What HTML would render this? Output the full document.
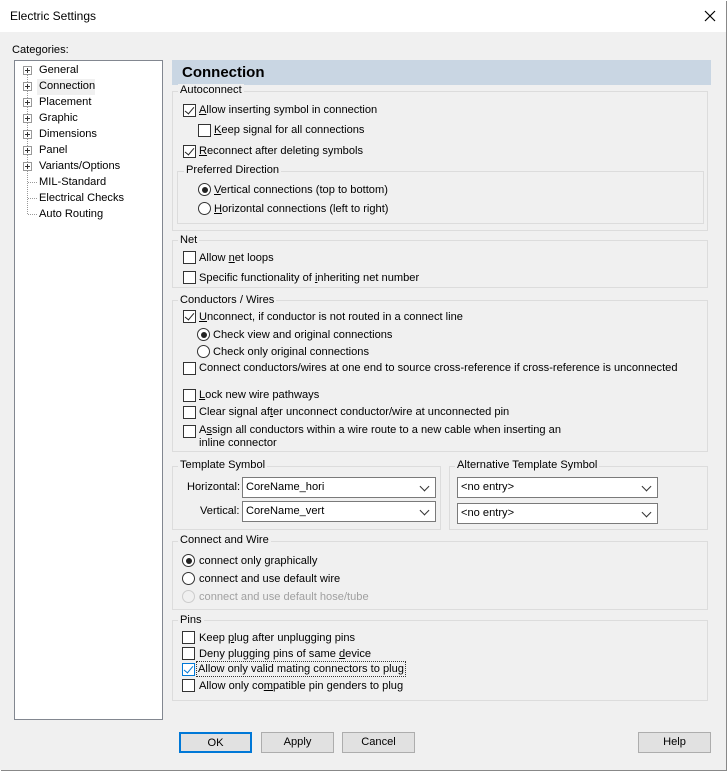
<!DOCTYPE html>
<html><head><meta charset="utf-8"><style>
*{box-sizing:border-box;margin:0;padding:0}
body{width:727px;height:771px;background:#fff;font-family:"Liberation Sans",sans-serif;font-size:11.1px;color:#000;position:relative;overflow:hidden}
.dlg{position:absolute;left:0;top:0;width:726px;height:770px;box-shadow:1px 1px 0 #888;background:#f0f0f0}
.tb{position:absolute;left:0;top:0;width:726px;height:32px;background:#fff}
.a{position:absolute;white-space:nowrap;line-height:14px}
.g{position:absolute;border:1px solid #dcdcdc}
.gl{position:absolute;background:#f0f0f0;padding:0 2px;line-height:13px;white-space:nowrap}
.cb{position:absolute;width:13px;height:13px;border:1px solid #333;background:#fff}
.cb.c::after{content:"";position:absolute;left:3px;top:0px;width:4px;height:8px;border:solid #222;border-width:0 1.3px 1.3px 0;transform:rotate(40deg)}
.cb.blue{border-color:#0078d7}
.cb.blue::after{border-color:#0078d7}
.rb{position:absolute;width:13px;height:13px;border:1px solid #333;border-radius:50%;background:#fff}
.rb.s::after{content:"";position:absolute;left:2.5px;top:2.5px;width:6px;height:6px;border-radius:50%;background:#222}
.rb.d{border-color:#ccc;background:#f0f0f0}
.cmb{position:absolute;height:21px;border:1px solid #7a7a7a;background:#fff;padding-left:3px;line-height:19px}
.cmb::after{content:"";position:absolute;right:7px;top:5px;width:6px;height:6px;border:solid #333;border-width:0 1px 1px 0;transform:rotate(45deg)}
.btn{position:absolute;height:21px;width:73px;border:1px solid #adadad;background:#e1e1e1;text-align:center;line-height:19px}
.tr{position:absolute;left:23px;width:9px;height:9px;border:1px solid #999;background:#fff}
.tr::before{content:"";position:absolute;left:1px;top:3px;width:5px;height:1px;background:#333}
.tr::after{content:"";position:absolute;left:3px;top:1px;width:1px;height:5px;background:#333}
u{text-decoration:underline}
</style></head><body>
<div class="dlg">
<div class="tb"></div>
<div class="a" style="left:10px;top:9px;font-size:12px">Electric Settings</div>
<svg style="position:absolute;left:704px;top:10px" width="12" height="12"><path d="M1 1L11 11M11 1L1 11" stroke="#000" stroke-width="1.2"/></svg>
<div class="a" style="left:12px;top:43px">Categories:</div>
<div style="position:absolute;left:14px;top:60px;width:149px;height:660px;border:1px solid #828790;background:#fff"></div>
<div style="position:absolute;left:27px;top:70px;height:144px;border-left:1px dotted #999"></div>
<div class="tr" style="top:66px"></div><div class="a" style="left:39px;top:63px">General</div>
<div style="position:absolute;left:37px;top:79px;width:58px;height:16px;background:#f0f0f0"></div>
<div class="tr" style="top:82px"></div><div class="a" style="left:39px;top:79px">Connection</div>
<div class="tr" style="top:98px"></div><div class="a" style="left:39px;top:95px">Placement</div>
<div class="tr" style="top:114px"></div><div class="a" style="left:39px;top:111px">Graphic</div>
<div class="tr" style="top:130px"></div><div class="a" style="left:39px;top:127px">Dimensions</div>
<div class="tr" style="top:146px"></div><div class="a" style="left:39px;top:143px">Panel</div>
<div class="tr" style="top:162px"></div><div class="a" style="left:39px;top:159px">Variants/Options</div>
<div style="position:absolute;left:28px;top:182px;width:9px;border-top:1px dotted #999"></div><div class="a" style="left:39px;top:175px">MIL-Standard</div>
<div style="position:absolute;left:28px;top:198px;width:9px;border-top:1px dotted #999"></div><div class="a" style="left:39px;top:191px">Electrical Checks</div>
<div style="position:absolute;left:28px;top:214px;width:9px;border-top:1px dotted #999"></div><div class="a" style="left:39px;top:207px">Auto Routing</div>

<div style="position:absolute;left:172px;top:60px;width:539px;height:25px;background:#c9d6e3"></div>
<div class="a" style="left:182px;top:65px;font-size:15px;font-weight:bold;line-height:16px">Connection</div>

<div class="g" style="left:172px;top:91px;width:536px;height:140px"></div>
<div class="gl" style="left:178px;top:84px">Autoconnect</div>
<div class="cb c" style="left:183px;top:104px"></div><div class="a" style="left:199px;top:103px"><u>A</u>llow inserting symbol in connection</div>
<div class="cb" style="left:198px;top:124px"></div><div class="a" style="left:214px;top:123px"><u>K</u>eep signal for all connections</div>
<div class="cb c" style="left:183px;top:145px"></div><div class="a" style="left:199px;top:144px"><u>R</u>econnect after deleting symbols</div>
<div class="g" style="left:177px;top:171px;width:527px;height:53px"></div>
<div class="gl" style="left:184px;top:164px">Preferred Direction</div>
<div class="rb s" style="left:198px;top:183px"></div><div class="a" style="left:214px;top:183px"><u>V</u>ertical connections (top to bottom)</div>
<div class="rb" style="left:198px;top:202px"></div><div class="a" style="left:214px;top:202px"><u>H</u>orizontal connections (left to right)</div>

<div class="g" style="left:172px;top:240px;width:536px;height:48px"></div>
<div class="gl" style="left:178px;top:234px">Net</div>
<div class="cb" style="left:183px;top:251px"></div><div class="a" style="left:199px;top:251px">Allow <u>n</u>et loops</div>
<div class="cb" style="left:183px;top:271px"></div><div class="a" style="left:199px;top:271px">Specific functionality of <u>i</u>nheriting net number</div>

<div class="g" style="left:172px;top:300px;width:536px;height:152px"></div>
<div class="gl" style="left:178px;top:294px">Conductors / Wires</div>
<div class="cb c" style="left:183px;top:310px"></div><div class="a" style="left:199px;top:310px"><u>U</u>nconnect, if conductor is not routed in a connect line</div>
<div class="rb s" style="left:197px;top:328px"></div><div class="a" style="left:213px;top:328px">Check view and original connections</div>
<div class="rb" style="left:197px;top:345px"></div><div class="a" style="left:213px;top:345px">Check only original connections</div>
<div class="cb" style="left:183px;top:362px"></div><div class="a" style="left:199px;top:361px">Connect conductors/wires at one end to source cross-reference if cross-reference is unconnected</div>
<div class="cb" style="left:183px;top:389px"></div><div class="a" style="left:199px;top:388px"><u>L</u>ock new wire pathways</div>
<div class="cb" style="left:183px;top:406px"></div><div class="a" style="left:199px;top:405px">Clear signal af<u>t</u>er unconnect conductor/wire at unconnected pin</div>
<div class="cb" style="left:183px;top:425px"></div><div class="a" style="left:199px;top:424px;line-height:13px">A<u>s</u>sign all conductors within a wire route to a new cable when inserting an<br>inline connector</div>

<div class="g" style="left:172px;top:466px;width:269px;height:64px"></div>
<div class="gl" style="left:178px;top:459px">Template Symbol</div>
<div class="a" style="left:187px;top:480px">Horizontal:</div>
<div class="cmb" style="left:242px;top:477px;width:194px">CoreName_hori</div>
<div class="a" style="left:200px;top:504px">Vertical:</div>
<div class="cmb" style="left:242px;top:501px;width:194px">CoreName_vert</div>
<div class="g" style="left:449px;top:466px;width:259px;height:64px"></div>
<div class="gl" style="left:455px;top:459px">Alternative Template Symbol</div>
<div class="cmb" style="left:457px;top:477px;width:201px">&lt;no entry&gt;</div>
<div class="cmb" style="left:457px;top:503px;width:201px">&lt;no entry&gt;</div>

<div class="g" style="left:172px;top:541px;width:536px;height:69px"></div>
<div class="gl" style="left:178px;top:534px">Connect and Wire</div>
<div class="rb s" style="left:182px;top:554px"></div><div class="a" style="left:199px;top:554px">connect only graphically</div>
<div class="rb" style="left:182px;top:572px"></div><div class="a" style="left:199px;top:572px">connect and use default wire</div>
<div class="rb d" style="left:182px;top:590px"></div><div class="a" style="left:199px;top:590px;color:#a0a0a0">connect and use default hose/tube</div>

<div class="g" style="left:172px;top:620px;width:536px;height:81px"></div>
<div class="gl" style="left:178px;top:614px">Pins</div>
<div class="cb" style="left:182px;top:631px"></div><div class="a" style="left:199px;top:631px">Keep <u>p</u>lug after unplugging pins</div>
<div class="cb" style="left:182px;top:647px"></div><div class="a" style="left:199px;top:647px">Deny plugging pins of same <u>d</u>evice</div>
<div class="cb c blue" style="left:182px;top:663px"></div><div class="a" style="left:197px;top:662px;outline:1px dotted #333;padding:0 1px">Allow only valid mating connectors to plu<u>g</u></div>
<div class="cb" style="left:182px;top:679px"></div><div class="a" style="left:199px;top:679px">Allow only co<u>m</u>patible pin genders to plug</div>

<div class="btn" style="left:179px;top:732px;border:2px solid #0078d7">OK</div>
<div class="btn" style="left:261px;top:732px">Apply</div>
<div class="btn" style="left:342px;top:732px">Cancel</div>
<div class="btn" style="left:638px;top:732px">Help</div>
</div>
</body></html>
